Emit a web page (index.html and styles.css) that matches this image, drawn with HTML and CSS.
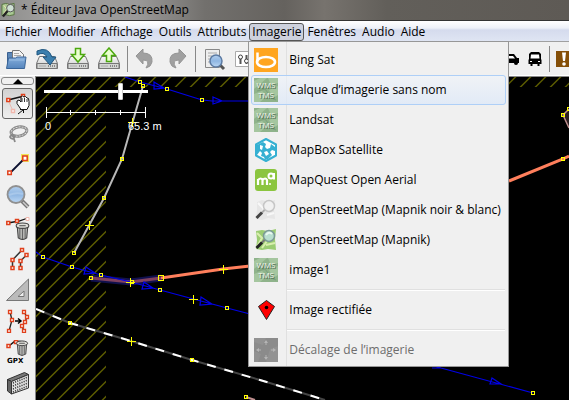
FILE: index.html
```html
<!DOCTYPE html>
<html lang="fr">
<head>
<meta charset="utf-8">
<meta name="viewport" content="width=device-width, initial-scale=1">
<title>Éditeur Java OpenStreetMap</title>
<link rel="stylesheet" href="styles.css">
</head>
<body>
<svg class="defs" width="0" height="0" aria-hidden="true">
  <defs>
    <linearGradient id="metal" x1="0" y1="0" x2="0" y2="1"><stop offset="0" stop-color="#fafafa"/><stop offset="1" stop-color="#c4c6c4"/></linearGradient>
    <linearGradient id="lens" x1="0" y1="0" x2="0" y2="1"><stop offset="0" stop-color="#b4d0ee"/><stop offset=".5" stop-color="#8fb6e2"/><stop offset="1" stop-color="#bcd8f4"/></linearGradient>
    <linearGradient id="folder" x1="0" y1="0" x2="0" y2="1"><stop offset="0" stop-color="#86afdc"/><stop offset="1" stop-color="#5585bd"/></linearGradient>
    <symbol id="disk" viewBox="0 0 24 24">
      <path d="M4.500 9.500h15l3 7v5h-21v-5z" fill="url(#metal)" stroke="#777" />
      <path d="M2 16.500h20v5H2z" fill="#d3d5d3" stroke="#777"/>
      <path d="M4 19h7" stroke="#aaa"/><path d="M13 19h7" stroke="#888" stroke-dasharray="1 1" stroke-width="2"/>
    </symbol>
    <symbol id="wms" viewBox="0 0 24 24">
      <path d="M0 0h24v24H0z" fill="#8fb38b"/>
      <path d="M0 3l6-3h7L6 6l-6 5zM14 0h10v5l-7 2zM0 16l8-3 5 5-7 6H0zM15 12l9-4v9l-5 3z" fill="#a5c69f"/>
      <path d="M3 13l8-2 3 4M17 20l5 2" stroke="#7c9f7b" fill="none"/>
      <text x="13" y="11" class="wms-shade">WMS</text><text x="13" y="21" class="wms-shade">TMS</text>
      <text x="12" y="10" class="wms-text">WMS</text><text x="12" y="20" class="wms-text">TMS</text>
    </symbol>
    <symbol id="bin" viewBox="0 0 14 17">
      <path d="M2 4h10l-1 11q-4 3-8 0z" fill="#b9bab7" stroke="#444"/>
      <path d="M4.500 6v9M7 6v10M9.500 6v9" stroke="#666"/>
      <ellipse cx="7" cy="3.500" rx="6" ry="2.500" fill="#deded9" stroke="#444"/>
      <path d="M4 3.500h6" stroke="#555"/>
    </symbol>
  </defs>
</svg>
<div class="app">
  <header class="titlebar">
    <svg class="app-icon" viewBox="0 0 16 16" aria-hidden="true">
      <path d="M1 2l4-1 4 1 5-1v12l-5 1-4-1-4 1z" fill="#a9c994" stroke="#55713f"/>
      <path d="M3 3l3 4-3 5M7 2v4" stroke="#efe9b0" fill="none"/>
      <circle cx="10" cy="6" r="4" fill="#cfe0d4" stroke="#555"/>
      <path d="M7 9l-5 6" stroke="#222" stroke-width="2.500"/>
    </svg>
    <span>* Éditeur Java OpenStreetMap</span>
  </header>

  <nav class="menubar" aria-label="Menus">
    <button class="menu-title">Fichier</button>
    <button class="menu-title">Modifier</button>
    <button class="menu-title">Affichage</button>
    <button class="menu-title">Outils</button>
    <button class="menu-title">Attributs</button>
    <div class="menu-host">
      <button class="menu-title open" aria-expanded="true">Imagerie</button>
      <div class="menu" role="menu">
        <button class="item" role="menuitem">
          <svg viewBox="0 0 24 24"><path d="M0 0h24v24H0z" fill="#ffa51f"/><path d="M3.500 4.500v9" stroke="#fff" stroke-width="2.500"/><ellipse cx="12" cy="14" rx="9" ry="5" fill="none" stroke="#fff" stroke-width="2.600"/></svg>
          <span>Bing Sat</span></button>
        <button class="item selected" role="menuitem"><svg><use href="#wms"/></svg><span>Calque d’imagerie sans nom</span></button>
        <button class="item" role="menuitem"><svg><use href="#wms"/></svg><span>Landsat</span></button>
        <button class="item" role="menuitem">
          <svg viewBox="0 0 24 24"><path d="M12 1l10 5.500v11L12 23 2 17.500v-11z" fill="#fff" stroke="#35b0d2" stroke-width="2" stroke-linejoin="round"/><path d="M3 7l6-3 3 2-1 3 2 2 3-1 1-4 4 3v4l-3-1-2 2 2 3-4 4-3 1-1-3-3-1 1-3-2-2-3 4z" fill="#35b0d2"/><path d="M6 7l3 1-1 4-2-1zM10 14l3-1 2 3-3 2z" fill="#fff"/></svg>
          <span>MapBox Satellite</span></button>
        <button class="item" role="menuitem">
          <svg viewBox="0 0 24 24"><rect x="1" y="1" width="22" height="22" rx="3" fill="#8bc53f"/><path d="M4 17v-6M4 12q3-3 4.500 0v5M8.500 12q3-3 4.500 0v5" fill="none" stroke="#fff" stroke-width="2.200"/><circle cx="17" cy="8" r="2.500" fill="none" stroke="#fff" stroke-width="2"/><path d="M20 5v6.500" stroke="#fff" stroke-width="2"/><circle cx="16" cy="16" r="1" fill="#fff"/></svg>
          <span>MapQuest Open Aerial</span></button>
        <button class="item" role="menuitem">
          <svg viewBox="0 0 24 24"><path d="M3 4l5-2 6 2 7-2-1 9 1 10-7-1-6 2-6-1 1-9z" fill="#e6e6e6"/><path d="M4 5l6 6-5 8M13 17l7-2" fill="none" stroke="#f8f8f8" stroke-width="2"/><circle cx="15" cy="8" r="5.500" fill="#f1f1f1" stroke="#c6c6c6" stroke-width="1.500"/><path d="M10.500 12l-3 3" stroke="#aaa" stroke-width="2"/><path d="M8 14.500L2.500 20" stroke="#444" stroke-width="3"/></svg>
          <span>OpenStreetMap (Mapnik noir &amp; blanc)</span></button>
        <button class="item" role="menuitem">
          <svg viewBox="0 0 24 24"><path d="M2 3l6-1 6 1 8-2-1 10 1 11-8-1-6 1-6-1 1-9z" fill="#9bcc72"/><path d="M3 5l5 5-5 9M12 17l9-2M8 20l5-7" fill="none" stroke="#d9eeae" stroke-width="2"/><circle cx="15" cy="8" r="5.500" fill="#b9dfcf" stroke="#7c9a96" stroke-width="1.500"/><path d="M12 7q3-4 6-1" fill="none" stroke="#eaf8f0" stroke-width="2"/><path d="M10.500 12l-3 3" stroke="#777" stroke-width="2"/><path d="M8 14.500L2.500 20" stroke="#222" stroke-width="3"/></svg>
          <span>OpenStreetMap (Mapnik)</span></button>
        <button class="item" role="menuitem"><svg><use href="#wms"/></svg><span>image1</span></button>
        <hr>
        <button class="item" role="menuitem">
          <svg viewBox="0 0 24 24"><path d="M12.500 2.500l8 6-8 13-8-13z" fill="#f00" stroke="#222"/><circle cx="12.500" cy="9.500" r="1.800" fill="#000"/></svg>
          <span>Image rectifiée</span></button>
        <hr>
        <button class="item" role="menuitem" disabled>
          <svg viewBox="0 0 24 24"><path d="M0 0h24v24H0z" fill="#929292"/><path d="M0 4l9 3 3-7h12v8l-8 3-4 13H4l3-8-7-3z" fill="#8b8b8b"/><path d="M12 2l2 3h-4zM12 22l2-3h-4zM2 12l3-2v4zM22 12l-3-2v4z" fill="#b5b5b5"/><path d="M12 4v3M12 17v3M4 12h3M17 12h3" stroke="#b5b5b5"/></svg>
          <span>Décalage de l’imagerie</span></button>
      </div>
    </div>
    <button class="menu-title">Fenêtres</button>
    <button class="menu-title">Audio</button>
    <button class="menu-title">Aide</button>
  </nav>

  <div class="toolbar" role="toolbar">
    <button class="tool" aria-label="Ouvrir"><svg viewBox="0 0 24 24"><path d="M3.500 20V5.500h5l1 2h10V18" fill="#5c87b8" stroke="#3a6090"/><path d="M8.500 3.500h7l4 4v8h-11z" fill="#f4f4f4" stroke="#777"/><path d="M10 6.500h5M10 8.500h7" stroke="#aaa"/><path d="M2.500 21.500l2-10.500h7l1.500-1h9l-1.500 11.500z" fill="url(#folder)" stroke="#3a6598"/><path d="M5 13h15" stroke="#9cc0e6"/></svg></button>
    <button class="tool" aria-label="Enregistrer"><svg viewBox="0 0 24 24"><use href="#disk"/><path d="M2 4q11-5 15 6h4l-6 8-7-8h4q-3-6-10-2z" fill="#3c7fae" stroke="#1f5680"/></svg></button>
    <button class="tool" aria-label="Télécharger"><svg viewBox="0 0 24 24"><use href="#disk"/><path d="M9.500 1.500h5v6h4l-6.500 7.500-6.500-7.500h4z" fill="#eaffd0" stroke="#4ba80e" stroke-width="1.500"/></svg></button>
    <button class="tool" aria-label="Envoyer"><svg viewBox="0 0 24 24"><use href="#disk"/><path d="M9.500 14.500h5v-6h4L12 1 5.500 8.500h4z" fill="#eaffd0" stroke="#4ba80e" stroke-width="1.500"/></svg></button>
    <span class="divider"></span>
    <button class="tool" aria-label="Annuler"><svg viewBox="0 0 24 24"><path d="M2 9l7-7v4q10 0 9 9-1 5-6 6 5-8-3-8v4z" fill="#a0a0a0" stroke="#959595"/></svg></button>
    <button class="tool" aria-label="Rétablir"><svg viewBox="0 0 24 24"><path d="M21 9l-7-7v4q-10 0-9 9 1 5 6 6-5-8 3-8v4z" fill="#a0a0a0" stroke="#959595"/></svg></button>
    <span class="divider"></span>
    <button class="tool" aria-label="Rechercher"><svg viewBox="0 0 24 24"><path d="M3.500 2.500h14v18h-14z" fill="#eee" stroke="#888"/><path d="M6 6h9M6 9h4M6 12h3M6 15h3" stroke="#aaa"/><path d="M17 17l5 5" stroke="#555" stroke-width="3"/><circle cx="14" cy="14" r="6" fill="url(#lens)" stroke="#5d7ba3" stroke-width="1.500"/></svg></button>
    <button class="tool" aria-label="Préférences"><svg viewBox="0 0 24 24"><path d="M2.500 4.500h20v15h-20z" fill="#fff" stroke="#aaa"/><path d="M7.500 8v9M13.500 8v9" stroke="#555" stroke-width="2"/><circle cx="7.500" cy="10" r="2" fill="#fff" stroke="#444"/><circle cx="13.500" cy="14" r="2" fill="#fff" stroke="#444"/></svg></button>
    <div class="toolbar-end">
      <button class="tool small" aria-label="Voiture"><svg viewBox="0 0 16 16"><path d="M0 3h10l3 4h2v5H0z"/><path d="M2 5h7l2 2.500H2z" fill="#fff"/><circle cx="12" cy="12" r="2"/></svg></button>
      <button class="tool small" aria-label="Bus"><svg viewBox="0 0 16 16"><path d="M4 1h8l2 2v5l.500 1v4h-2v2h-2v-2h-5v2h-2v-2h-2V9L2 8V3z"/><path d="M4 3.500h8l.500 4h-9z" fill="#fff"/><path d="M3 10h2v1H3zM11 10h2v1h-2z" fill="#fff"/></svg></button>
      <span class="divider"></span>
      <button class="tool warn" aria-label="Avertissement"><svg viewBox="0 0 16 16"><path d="M0 0h16v16H0z" fill="#854f08"/><path d="M6 1.500h4l-1 8.500H7z" fill="#fff"/><circle cx="8" cy="13" r="1.800" fill="#fff"/></svg></button>
    </div>
  </div>

  <main class="workspace">
    <aside class="sidebar">
      <button class="scroll-up" aria-label="Défiler vers le haut"><svg viewBox="0 0 10 5"><path d="M0 5l5-5 5 5z"/></svg></button>
      <button class="mode active" aria-label="Sélection"><svg viewBox="0 0 24 24"><path d="M2 8l16-4" stroke="#111" stroke-width="1.500"/><path d="M2 8l5 11" stroke="#e9b9b0"/><g fill="#fff" stroke="#e0401c" stroke-width="1.500"><path d="M.800 6.500h3v3h-3zM15.500 2.500h3v3h-3z"/><path d="M5.500 17.500h3v3h-3z" stroke="#f0b8ae"/></g><path d="M11 9l2-1 2 2V5l1.500-1L18 5l1.500-.500L21 6l1.500.500.500 3v4l-2 4h-6l-4-6z" fill="#fff" stroke="#111"/><path d="M16 6v4M18.500 6v4M21 7v3" stroke="#333"/><path d="M12 22l5-4M14 17.500h3.500V21" fill="none" stroke="#111"/></svg></button>
      <button class="mode" aria-label="Lasso"><svg viewBox="0 0 24 24"><ellipse cx="13" cy="8.500" rx="8" ry="4.500" transform="rotate(-10 13 8.500)" fill="none" stroke="#888" stroke-width="3"/><ellipse cx="13" cy="8.500" rx="8" ry="4.500" transform="rotate(-10 13 8.500)" fill="none" stroke="#ddd" stroke-dasharray="2 1"/><path d="M5 11q5 2 3 4t-4-1q0-2 3-1l2 6" fill="none" stroke="#888" stroke-width="1.800"/></svg></button>
      <button class="mode" aria-label="Dessiner"><svg viewBox="0 0 24 24"><path d="M15 0h8v8h-8z" fill="#f2e45a"/><path d="M4 19L17 6" stroke="#0c1030" stroke-width="1.800"/><path d="M16.800 2h4.400v4.400h-4.400zM1.800 17h3.500v3.500H1.800z" fill="#fff" stroke="#e0401c" stroke-width="1.500"/></svg></button>
      <button class="mode" aria-label="Zoom"><svg viewBox="0 0 24 24"><path d="M16 16l6 6" stroke="#777" stroke-width="4"/><path d="M17 17l5 5" stroke="#ccc" stroke-width="1.500"/><circle cx="10" cy="9.500" r="8.500" fill="url(#lens)" stroke="#909090" stroke-width="1.800"/><path d="M3 10q7-3 14-1" fill="none" stroke="#a9c8ea" stroke-width="2"/></svg></button>
      <button class="mode" aria-label="Supprimer"><svg viewBox="0 0 24 24"><path d="M2 7l11-2 9-3" stroke="#111" stroke-width="1.300" fill="none"/><path d="M.800 5.500h3v3h-3zM9.500 3.500h3v3h-3z" fill="#fff" stroke="#e0401c" stroke-width="1.500"/><path d="M20 1.500h3v3h-3z" fill="#fff" stroke="#f0b8ae"/><use href="#bin" x="9" y="6" width="15" height="18"/></svg></button>
      <button class="mode" aria-label="Parallèle"><svg viewBox="0 0 24 24"><path d="M16 3L6.500 13v8M20.500 8L14.500 14v7" fill="none" stroke="#333" stroke-width="1.500"/><path d="M14.500 1.500h3v3h-3zM5 11.500h3v3H5zM5 19.500h3v3H5zM19 6.500h3v3h-3zM13 12.500h3v3h-3zM13 19.500h3v3h-3z" fill="#fff" stroke="#e0401c" stroke-width="1.500"/></svg></button>
      <button class="mode" aria-label="Angle"><svg viewBox="0 0 24 24"><path d="M22.500 1v21.500H.500z" fill="#bbb" stroke="#777"/><path d="M18 13v5.500h-6z" fill="#eee" stroke="#777"/></svg></button>
      <button class="mode" aria-label="Améliorer la précision"><svg viewBox="0 0 24 24"><path d="M4 3l2 8-3 11M18 3l3 5-2 5-3 4 2 5" fill="none" stroke="#222" stroke-width="1.300"/><path d="M9 12h5M12 9.500l3 2.500-3 2.500" fill="none" stroke="#000" stroke-width="1.500"/><path d="M2.500 1.500h3v3h-3zM4.500 9.500h3v3h-3zM1.500 20.500h3v3h-3zM16.500 1.500h3v3h-3zM19.500 6.500h3v3h-3zM17.500 11.500h3v3h-3zM14.500 15.500h3v3h-3zM16.500 20.500h3v3h-3z" fill="#fff" stroke="#e0401c" stroke-width="1.300"/></svg></button>
      <button class="mode" aria-label="Supprimer GPX"><svg viewBox="0 0 24 24"><path d="M3 6l6-5 9 1" stroke="#111" stroke-width="1.500" fill="none"/><path d="M1 4.500h3v3H1zM8.500 .500h3v3h-3z" fill="#fff" stroke="#e0401c" stroke-width="1.500"/><use href="#bin" x="9" y="0" width="14" height="16"/><text x="1" y="23" class="gpx">GPX</text></svg></button>
      <button class="mode" aria-label="Bâtiment"><svg viewBox="0 0 24 24"><path d="M1.500 8.500l17-7 4 2-17 7z" fill="#777" stroke="#333"/><path d="M1.500 8.500l4 2V23l-4-3z" fill="#666" stroke="#333"/><path d="M5.500 10.500l17-7V17l-17 6z" fill="#ddd" stroke="#333"/><path d="M7 12l15-6M7 15l15-6M7 18l15-6M7 21l15-6" stroke="#222" stroke-width="1.500" stroke-dasharray="1 1.300"/></svg></button>
    </aside>

    <section class="map">
      <svg class="canvas" viewBox="36 77 533 323" preserveAspectRatio="xMinYMin slice" role="img" aria-label="Carte">
        <defs><pattern id="hatch" width="15" height="15" patternUnits="userSpaceOnUse"><path d="M-1 8.500L8.500-1M6.500 16L16 6.500" stroke="#5c5c00" stroke-width="1.500"/></pattern></defs>
        <path d="M36 77h533v10H106v313H36z" fill="url(#hatch)"/>
        <g fill="none">
          <path d="M569 109l-6 6 6 13" fill="#2b1e20" stroke="#c09090" stroke-width="1.500"/>
          <path d="M36 309l34 14 61 18 61 19 68 20 65 20" stroke="#444" stroke-width="2"/>
          <path d="M36 309l34 14 61 18 61 19 68 20 65 20" stroke="#fff" stroke-width="2" stroke-dasharray="9 9"/>
          <path d="M143 86l-21 73-18 39-30 55" stroke="#b8b8b8" stroke-width="2"/>
          <path d="M91 278l40 4 30-4" stroke="#10104e" stroke-width="7"/>
          <path d="M91 278l40 4 30-4" stroke="#80405f" stroke-width="3"/>
          <path d="M161 278l62-9 27-3M509 181l54-22 6-3" stroke="#ff7f5c" stroke-width="3"/>
          <path d="M125 77l15 5 27 7 35 11 10 1h38M154 82l10 6-10 1zM213 97l9 4-9 3zM36 252l7 5 29 10 29 8 30 7 29 8 67 18 23 6 M86 267l9 6-11 1zM144 282l9 6-11 1zM201 297l11 7-12 1zM431 365l10 3 92 25M432 368l9 0M492 378l9 6h-11z" stroke="#0000e8" stroke-width="1.200"/>
          <path d="M246 397l9 3" stroke="#c09090" stroke-width="2"/>
        </g>
        <g fill="none" stroke="#ffff00" stroke-width="1" shape-rendering="crispEdges">
          <path d="M138.500 80.500h3v3h-3zM141.500 84.500h3v3h-3zM165.500 87.500h3v3h-3zM200.500 98.500h3v3h-3zM120.500 157.500h3v3h-3zM102.500 196.500h3v3h-3zM72.500 251.500h3v3h-3zM41.500 255.500h3v3h-3zM70.500 265.500h3v3h-3zM99.500 273.500h3v3h-3zM89.500 276.500h3v3h-3zM130.500 280.500h3v3h-3zM158.500 275.500h5v5h-5zM158.500 288.500h3v3h-3zM225.500 306.500h3v3h-3zM68.500 321.500h3v3h-3zM190.500 358.500h3v3h-3zM244.500 395.500h3v3h-3zM531.500 391.500h3v3h-3zM561.500 113.500h3v3h-3zM561.500 157.500h3v3h-3zM567.500 107.500h3v3h-3z"/>
          <path d="M128 122.500h9M132.500 118v9M85 225.500h9M89.500 221v9M126 282.500h9M130.500 278v9M219 269.500h9M223.500 265v9M189 299.500h9M193.500 295v9M127 341.500h9M131.500 337v9"/>
        </g>
        <path d="M46 112.500h100M46.500 107v11M70.500 110v5M95.500 110v5M120.500 110v5M145.500 107v11" stroke="#fff" shape-rendering="crispEdges"/>
        <text x="45" y="130" class="scale">0</text><text x="128" y="130" class="scale">65.3 m</text>
      </svg>
      <input class="zoom-slider" type="range" min="0" max="100" value="75" aria-label="Zoom">
    </section>
  </main>
</div>
</body>
</html>
```
FILE: styles.css
```css
* { box-sizing: border-box; }
body { margin: 0; font: 12px/18px "Open Sans", "Noto Sans", sans-serif; color: #000; background: #f0f0f0; }
button { margin: 0; padding: 0; border: 0; background: none; font: inherit; color: inherit; }
svg { display: block; }
.defs { position: absolute; }

.app { display: flex; flex-direction: column; height: 100vh; overflow: hidden; }

.titlebar {
  display: flex; align-items: center; gap: 5px; flex: none;
  height: 21px; padding: 0 0 0 1px;
  border-bottom: 1px solid #333;
  background: linear-gradient(90deg, #8d8d8b 0, #a09f9e 8%, #9b9a99 24%, #72706d 36%, #65625e 50%, #77736e 57%, #625f5a 68%, #5e5a55 100%);
}
.app-icon { width: 15px; height: 16px; }

.menubar {
  display: flex; flex: none; align-items: center;
  height: 21px; padding: 1px 0 0 2px;
  border-bottom: 1px solid #a0a0a0;
  background: linear-gradient(#fff 0, #eef1f8 35%, #d5dbed 45%, #dfe5f3 100%);
}
.menu-title { display: block; height: 18px; padding: 0 2px; border: 1px solid transparent; line-height: 16px; white-space: nowrap; }
.menu-title.open { border-color: #555; border-radius: 3px; background: #cdd1dd; }
.menu-host { position: relative; }

.menu {
  position: absolute; z-index: 2; top: 18px; left: -1px; width: 261px;
  padding: 3px 2px 1px;
  border: 1px solid #979797;
  background: linear-gradient(#e0e0e0, #e0e0e0) 37px 0 / 1px 100% no-repeat, #f0f0f0;
}
.item {
  display: flex; align-items: center; gap: 11px;
  width: 100%; height: 30px; padding: 0 2px;
  border: 1px solid transparent; border-radius: 3px;
  text-align: left; white-space: nowrap;
}
.item svg { flex: none; width: 24px; height: 24px; }
.item.selected { border-color: #aecff7; background: linear-gradient(rgba(240, 244, 250, .6), rgba(222, 233, 248, .8)); }
.item:disabled { color: #6d6d6d; }
.menu hr { height: 2px; margin: 4px 1px 4px 36px; border: 0; border-top: 1px solid #e0e0e0; border-bottom: 1px solid #fff; }
.wms-text, .wms-shade { font: 8px "Open Sans", sans-serif; text-anchor: middle; }
.wms-text { fill: #f0f5ee; }
.wms-shade { fill: #4c664c; }

.toolbar {
  display: flex; flex: none; align-items: center; gap: 7px;
  height: 34px; padding: 0 0 0 4px;
  border-bottom: 1px solid #fff;
  background: #f0f0f0;
}
.tool { flex: none; width: 24px; height: 24px; }
.tool svg { width: 100%; height: 100%; }
.tool.small { width: 16px; height: 16px; }
.tool.warn { width: 16px; height: 16px; }
.divider { flex: none; width: 1px; height: 26px; margin: 0 -1px; background: #888; }
.toolbar-end { display: flex; align-items: center; gap: 7px; margin: 0 -3px 0 auto; }

.workspace { display: flex; flex: 1; min-height: 0; }
.sidebar { display: flex; flex: none; flex-direction: column; align-items: center; width: 35px; padding: 1px 0 0; background: #f0f0f0; overflow: hidden; }
.scroll-up { display: grid; place-items: center; flex: none; width: 33px; height: 8px; margin: 0 0 3px; border: 1px solid #888; border-radius: 3px; }
.scroll-up svg { width: 10px; height: 5px; }
.mode { display: grid; place-items: center; flex: none; width: 31px; height: 31px; border: 1px solid transparent; border-radius: 3px; }
.mode svg { width: 24px; height: 24px; }
.mode.active { border-color: #666; background: linear-gradient(#d2d2d2, #eee); }
.gpx { font: bold 7px "DejaVu Sans", sans-serif; }

.map { position: relative; flex: 1; min-width: 0; overflow: hidden; border-top: 1px solid #888; border-left: 1px solid #888; background: #000; }
.canvas { width: 100%; height: 100%; }
.scale { font: 11px "Liberation Sans", sans-serif; fill: #fff; }
.zoom-slider { position: absolute; top: 6px; left: 8px; width: 104px; height: 16px; margin: 0; appearance: none; background: none; }
.zoom-slider::-webkit-slider-runnable-track { height: 3px; background: #fff; }
.zoom-slider::-webkit-slider-thumb { appearance: none; width: 5px; height: 17px; margin: -7px 0 0; border: 1px solid #ccc; border-radius: 1px; background: #fff; }
```
